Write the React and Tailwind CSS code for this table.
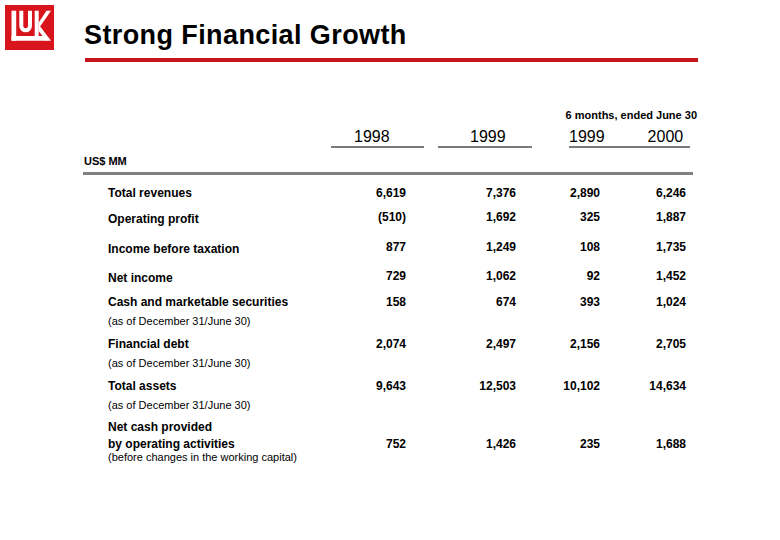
import React from "react";

const rows = [
  { label: ["Total revenues"], values: ["6,619", "7,376", "2,890", "6,246"], h: "h-[24px]", lp: "pt-0", vp: "pt-0" },
  { label: ["Operating profit"], values: ["(510)", "1,692", "325", "1,887"], h: "h-[30px]", lp: "pt-[2px]", vp: "pt-0" },
  { label: ["Income before taxation"], values: ["877", "1,249", "108", "1,735"], h: "h-[29px]", lp: "pt-[2px]", vp: "pt-0" },
  { label: ["Net income"], values: ["729", "1,062", "92", "1,452"], h: "h-[26px]", lp: "pt-[2px]", vp: "pt-0" },
  { label: ["Cash and marketable securities"], sub: "(as of December 31/June 30)", values: ["158", "674", "393", "1,024"], h: "h-[42px]", lp: "pt-0", vp: "pt-0" },
  { label: ["Financial debt"], sub: "(as of December 31/June 30)", values: ["2,074", "2,497", "2,156", "2,705"], h: "h-[42px]", lp: "pt-0", vp: "pt-0" },
  { label: ["Total assets"], sub: "(as of December 31/June 30)", values: ["9,643", "12,503", "10,102", "14,634"], h: "h-[41px]", lp: "pt-0", vp: "pt-0" },
  {
    label: ["Net cash provided", "by operating activities"],
    sub: "(before changes in the working capital)",
    values: ["752", "1,426", "235", "1,688"],
    h: "h-[60px]",
    lp: "pt-0",
    vp: "pt-[17px]",
  },
];

const colWidths = ["w-[60px]", "w-[110px]", "w-[84px]", "w-[86px]"];

function Logo() {
  return (
    <div className="w-[49px] h-[45px] bg-[#d8141c]">
      <svg width="49" height="45" viewBox="0 0 49 45">
        <rect x="6.5" y="5.7" width="4.7" height="30" fill="#fff" />
        <polygon points="6.5,31 42,31 42,35.7 6.5,35.7" fill="#fff" />
        <path d="M16.3 5.7 V21 A4.35 4.35 0 0 0 25 21 V5.7" stroke="#fff" strokeWidth="4" fill="none" />
        <rect x="29.7" y="5.7" width="4" height="27" fill="#fff" />
        <polygon points="33.7,17.5 41.5,5.7 46,5.7 33.7,23.5" fill="#fff" />
        <polygon points="33.7,19.5 46,35.7 41,35.7 33.7,26" fill="#fff" />
      </svg>
    </div>
  );
}

function Row({ row }) {
  return (
    <div className={`flex ${row.h}`}>
      <div className={`w-[238px] ${row.lp}`}>
        {row.label.map((l, i) => (
          <div key={i} className={`text-[12px] leading-none font-bold ${i > 0 ? "mt-[5px]" : ""}`}>
            {l}
          </div>
        ))}
        {row.sub && (
          <div className={`text-[11px] leading-none ${row.label.length > 1 ? "mt-[2px]" : "mt-[8px]"}`}>{row.sub}</div>
        )}
      </div>
      {row.values.map((v, i) => (
        <div key={i} className={`${colWidths[i]} ${row.vp} text-right text-[12px] leading-none font-bold`}>
          {v}
        </div>
      ))}
    </div>
  );
}

export default function App() {
  return (
    <div className="w-[780px] h-[540px] bg-white text-black font-['Liberation_Sans',Arial,sans-serif] overflow-hidden">
      <div className="flex">
        <div className="ml-[5px] mt-[5px]">
          <Logo />
        </div>
        <div className="ml-[30px] pt-[22px]">
          <div className="text-[27px] leading-none font-bold tracking-[0.4px]">Strong Financial Growth</div>
          <div className="ml-[1px] mt-[9px] w-[613px] h-[4px] bg-[#c4161c]" />
        </div>
      </div>

      <div className="mt-[48px] w-[697px] text-right text-[11px] leading-none font-bold">6 months, ended June 30</div>

      <div className="mt-[8px] ml-[331px] flex">
        <div className="w-[93px]">
          <div className="pl-[23px] text-[16px] leading-none">1998</div>
          <div className="mt-[1px] h-[2px] bg-[#7a7a7a]" />
        </div>
        <div className="ml-[14px] w-[94px]">
          <div className="pl-[32px] text-[16px] leading-none">1999</div>
          <div className="mt-[1px] h-[2px] bg-[#7a7a7a]" />
        </div>
        <div className="ml-[37px] w-[121px]">
          <div className="flex gap-[43px] text-[16px] leading-none">
            <span>1999</span>
            <span>2000</span>
          </div>
          <div className="mt-[1px] h-[2px] bg-[#7a7a7a]" />
        </div>
      </div>

      <div className="mt-[8px] ml-[84px] text-[11px] leading-none font-bold">US$ MM</div>
      <div className="mt-[5px] ml-[83px] w-[610px] h-[3px] bg-[#808080]" />

      <div className="mt-[12px] ml-[108px]">
        {rows.map((r, i) => (
          <Row key={i} row={r} />
        ))}
      </div>
    </div>
  );
}
